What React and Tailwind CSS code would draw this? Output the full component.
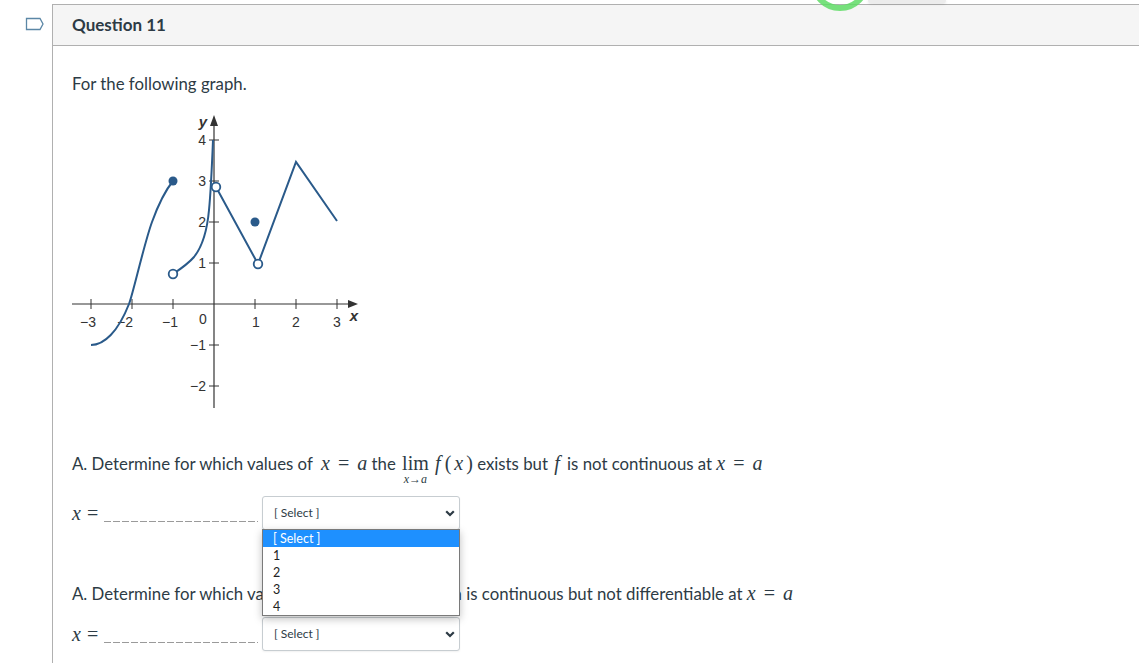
import React from "react";

const C = "#2a5a8a";

function Graph() {
  const px = (x) => 144 + 41 * x;
  const py = (y) => 194 - 41 * y;
  const xt = [-3, -2, -1, 1, 2, 3];
  const yt = [-2, -1, 1, 2, 3, 4];
  const lab = { fontFamily: "'Liberation Sans', Arial, sans-serif", fontSize: 14, fill: "#333" };
  return (
    <svg width="292" height="300" viewBox="0 0 292 300" className="block">
      <line x1="2" y1="194" x2="282" y2="194" stroke="#333" strokeWidth="1.2" />
      <polygon points="288,194 278,190 278,198" fill="#333" />
      <line x1="144" y1="298" x2="144" y2="12" stroke="#333" strokeWidth="1.2" />
      <polygon points="144,5 140,16 148,16" fill="#333" />
      {xt.map((x) => (
        <line key={"xt" + x} x1={px(x)} y1="189" x2={px(x)} y2="199" stroke="#333" strokeWidth="1" />
      ))}
      {yt.map((y) => (
        <line key={"yt" + y} x1="139" y1={py(y)} x2="149" y2={py(y)} stroke="#333" strokeWidth="1" />
      ))}
      <text x={px(-3) - 3} y="217" textAnchor="middle" style={lab}>−3</text>
      <text x={px(-2) - 7} y="217" textAnchor="middle" style={lab}>−2</text>
      <text x={px(-1) - 3} y="217" textAnchor="middle" style={lab}>−1</text>
      <text x="133" y="214" textAnchor="middle" style={lab}>0</text>
      <text x={px(1) + 1} y="217" textAnchor="middle" style={lab}>1</text>
      <text x={px(2)} y="217" textAnchor="middle" style={lab}>2</text>
      <text x={px(3)} y="217" textAnchor="middle" style={lab}>3</text>
      {[4, 3, 2, 1, -1, -2].map((y) => (
        <text key={"yl" + y} x="136" y={py(y) + 5} textAnchor="end" style={lab}>
          {y < 0 ? "−" + -y : y}
        </text>
      ))}
      <text x="133" y="17" textAnchor="middle" style={{ ...lab, fontStyle: "italic", fontWeight: 700, fontSize: 15 }}>y</text>
      <text x="284" y="211" textAnchor="middle" style={{ ...lab, fontStyle: "italic", fontWeight: 700, fontSize: 15 }}>x</text>
      <path d="M21,235 C34,235 48,222 59,194 C63,184 74,134 82,112 C86,101 94,82 103,71" fill="none" stroke={C} strokeWidth="2" />
      <path d="M103,164 C112,158 118,154 124,147 C132,137 137,122 139,100 C141,80 142,55 143,30" fill="none" stroke={C} strokeWidth="2" />
      <polyline points="146,77 188,154 226,52 267,111" fill="none" stroke={C} strokeWidth="2" strokeLinejoin="miter" />
      <circle cx="103" cy="71" r="4.5" fill={C} />
      <circle cx="185" cy="112" r="4.5" fill={C} />
      <circle cx="103" cy="164" r="4.3" fill="#fff" stroke={C} strokeWidth="1.8" />
      <circle cx="146" cy="77" r="4.3" fill="#fff" stroke={C} strokeWidth="1.8" />
      <circle cx="188" cy="154" r="4.3" fill="#fff" stroke={C} strokeWidth="1.8" />
    </svg>
  );
}

const M = "font-['Liberation_Serif',serif] text-[20px]";

function XEqA() {
  return (
    <span className={`${M} whitespace-nowrap`}>
      <span className="italic">x</span>
      <span className="mx-[8px]">=</span>
      <span className="italic">a</span>
    </span>
  );
}

function Lim() {
  return (
    <span className="inline-flex flex-col items-center relative mx-[2px]">
      <span className={`${M} leading-[20px]`}>lim</span>
      <span className="absolute top-[21px] font-['Liberation_Serif',serif] italic text-[12px] leading-[11px] whitespace-nowrap">
        x→a
      </span>
    </span>
  );
}

function Fx() {
  return (
    <span className={`${M} whitespace-nowrap`}>
      <span className="italic mr-[4px]">f</span>(<span className="italic mx-[3px]">x</span>)
    </span>
  );
}

function Chevron() {
  return (
    <svg width="10" height="7" viewBox="0 0 10 7">
      <path d="M1.2,1.2 L5,5 L8.8,1.2" fill="none" stroke="#2d3b45" strokeWidth="2.2" />
    </svg>
  );
}

function SelectBox({ children }) {
  return (
    <div className="relative w-[198px] h-[34px] border border-[#c7cdd1] rounded-[3px] bg-white flex items-center justify-between pl-[11px] pr-[4px] text-[12px] shadow-[0_1px_2px_rgba(0,0,0,0.06)]">
      <span className="text-[#2d3b45]">[ Select ]</span>
      <Chevron />
      {children}
    </div>
  );
}

function AnswerRow({ open }) {
  return (
    <div className="flex items-center">
      <div className="flex items-end h-[20px]">
        <span className={`${M} w-[32px] leading-[20px]`}>
          <span className="italic">x</span>
          <span className="ml-[6px]">=</span>
        </span>
        <span className="block w-[154px] h-px mb-[1px] bg-[repeating-linear-gradient(to_right,#9a9a9a_0_7px,transparent_7px_9px)]" />
      </div>
      <div className="ml-[4px]">
        <SelectBox>
          {open && (
            <div className="absolute left-[-1px] top-[32px] w-[198px] h-[87px] bg-white border border-[#7a7a7a] shadow-[0_3px_8px_rgba(0,0,0,0.25)] z-10 text-[12.5px] leading-[17px]">
              <div className="h-[17px] bg-[#1e90ff] text-white pl-[10px]">[ Select ]</div>
              <div className="h-[17px] pl-[10px] text-[#222]">1</div>
              <div className="h-[17px] pl-[10px] text-[#222]">2</div>
              <div className="h-[17px] pl-[10px] text-[#222]">3</div>
              <div className="h-[17px] pl-[10px] text-[#222]">4</div>
            </div>
          )}
        </SelectBox>
      </div>
    </div>
  );
}

export default function App() {
  return (
    <div className="relative w-[1139px] h-[663px] overflow-hidden bg-white font-['Lato',sans-serif] text-[#2d3b45]">
      <div className="flex h-full">
        <div className="w-[52px] shrink-0 pt-[17px] pl-[25px]">
          <svg width="20" height="14" viewBox="0 0 20 14">
            <path d="M1.5,1.5 H15 L18,7 L15,12.5 H1.5 Z" fill="none" stroke="#5b87a6" strokeWidth="1.3" />
          </svg>
        </div>
        <div className="flex-1 mt-[4px] border-l border-t border-[#b0b0b0] flex flex-col">
          <div className="h-[41px] bg-[#f5f5f5] border-b border-[#b0b0b0] flex items-center pl-[19px]">
            <span className="font-bold text-[17px]">Question 11</span>
          </div>
          <div className="relative px-[19px] pt-[28px]">
            <p className="text-[16.8px] leading-[20px]">For the following graph.</p>
            <div className="mt-[16px] ml-[-2px]">
              <Graph />
            </div>
            <div className="mt-[41px] h-[24px] text-[16.8px] leading-[24px] whitespace-nowrap">
              A. Determine for which values of&nbsp; <XEqA /> the <Lim /> <Fx /> exists but{" "}
              <span className={`${M} italic ml-[2px] mr-[3px]`}>f</span> is not continuous at <XEqA />
            </div>
            <div className="mt-[21px]">
              <AnswerRow open />
            </div>
            <div className="mt-[51px] h-[24px] text-[16.8px] leading-[24px] whitespace-nowrap">
              A. Determine for which values of&nbsp; <XEqA /> the function is continuous but not differentiable at{" "}
              <XEqA />
            </div>
            <div className="mt-[12px]">
              <AnswerRow />
            </div>
          </div>
        </div>
      </div>
      <div className="absolute left-[868px] top-0 w-[78px] h-[3px] bg-[#ececec] rounded-b-[3px] shadow-[0_1px_3px_rgba(0,0,0,0.12)]" />
      <svg className="absolute left-[806px] top-0" width="68" height="16" viewBox="0 0 68 16">
        <circle cx="34" cy="-19" r="27" fill="none" stroke="#5fdc66" strokeWidth="6" opacity="0.85" />
      </svg>
    </div>
  );
}
